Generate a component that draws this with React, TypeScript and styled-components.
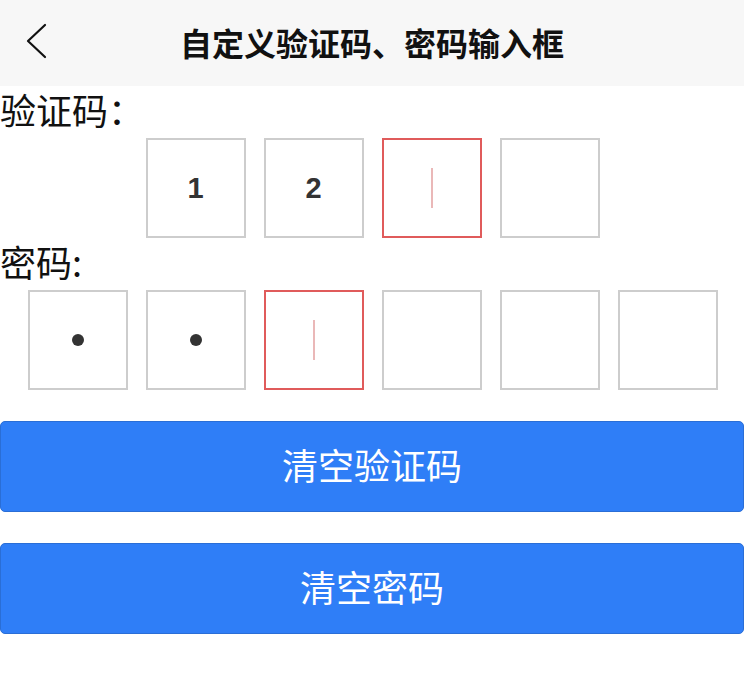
import React from "react";
import styled, { createGlobalStyle } from "styled-components";

const Global = createGlobalStyle`
  html, body { margin: 0; padding: 0; background: #fff; }
  body { font-family: "Noto Sans CJK SC", "Noto Sans", sans-serif; }
  * { box-sizing: border-box; }
`;

const Page = styled.div`
  width: 744px;
  display: flex;
  flex-direction: column;
`;

const Header = styled.header`
  height: 86px;
  background: #f7f7f7;
  display: grid;
  grid-template-columns: 80px 1fr 80px;
  align-items: center;
`;

const BackButton = styled.div`
  display: flex;
  align-items: center;
  padding-left: 24px;
  padding-bottom: 4px;
  height: 100%;
`;

const Title = styled.h1`
  margin: 0;
  text-align: center;
  font-size: 32px;
  font-weight: 700;
  color: #111;
  line-height: 1;
  padding-bottom: 3px;
`;

const Label = styled.div`
  height: 52px;
  line-height: 46px;
  font-size: 36px;
  color: #111;
  padding-bottom: 6px;
`;

const BoxRow = styled.div`
  display: flex;
  justify-content: center;
  gap: 18px;
  padding-left: 1px;
`;

const Box = styled.div<{ $active?: boolean }>`
  width: 100px;
  height: 100px;
  border: 2px solid ${(p) => (p.$active ? "#e05b5b" : "#cdcdcd")};
  display: flex;
  align-items: center;
  justify-content: center;
  font-family: "Liberation Sans", Arial, sans-serif;
  font-size: 29px;
  font-weight: 700;
  color: #333;
`;

const Cursor = styled.span`
  width: 2px;
  height: 40px;
  background: #eab8b8;
`;

const Dot = styled.span`
  width: 12px;
  height: 12px;
  border-radius: 50%;
  background: #333;
`;

const Buttons = styled.div`
  display: flex;
  flex-direction: column;
  gap: 31px;
  margin-top: 31px;
`;

const Button = styled.button`
  height: 91px;
  width: 100%;
  background: #2f7ef7;
  border: 1px solid #2a6ed6;
  border-radius: 5px;
  color: #fff;
  font-family: "Noto Sans CJK SC", sans-serif;
  font-size: 36px;
  font-weight: 400;
  line-height: 1;
  display: flex;
  align-items: center;
  justify-content: center;
  padding: 0 0 6px 0;
`;

const codes = ["1", "2", "", ""];
const codeActive = 2;
const pwLen = 2;

export default function App() {
  return (
    <Page>
      <Global />
      <Header>
        <BackButton>
          <svg width="24" height="36" viewBox="0 0 24 36">
            <polyline points="21,2 4,18 21,34" fill="none" stroke="#111" strokeWidth="2.2" strokeLinecap="round" strokeLinejoin="round" />
          </svg>
        </BackButton>
        <Title>自定义验证码、密码输入框</Title>
        <div />
      </Header>
      <Label>验证码：</Label>
      <BoxRow>
        {codes.map((c, i) => (
          <Box key={i} $active={i === codeActive}>
            {i === codeActive ? <Cursor /> : c}
          </Box>
        ))}
      </BoxRow>
      <Label>密码:</Label>
      <BoxRow>
        {Array.from({ length: 6 }).map((_, i) => (
          <Box key={i} $active={i === pwLen}>
            {i < pwLen ? <Dot /> : i === pwLen ? <Cursor /> : null}
          </Box>
        ))}
      </BoxRow>
      <Buttons>
        <Button>清空验证码</Button>
        <Button>清空密码</Button>
      </Buttons>
    </Page>
  );
}
